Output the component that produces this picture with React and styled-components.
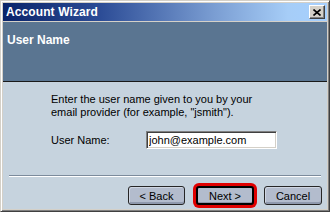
import React from "react";
import styled, { createGlobalStyle } from "styled-components";

const GlobalStyle = createGlobalStyle`
  html, body { margin: 0; padding: 0; background: #d4d0c8; }
  body { font-family: "Liberation Sans", "DejaVu Sans", sans-serif; font-size: 11px; }
  * { box-sizing: border-box; }
`;

const Window = styled.div`
  width: 330px;
  height: 212px;
  background: #d4d0c8;
  border: 1px solid;
  border-color: #d4d0c8 #404040 #404040 #d4d0c8;
  box-shadow: inset 1px 1px #ffffff, inset -1px -1px #808080;
  padding: 2px;
  display: flex;
  flex-direction: column;
`;

const TitleBar = styled.div`
  height: 18px;
  flex: none;
  margin-bottom: 1px;
  background: linear-gradient(to right, #0a246a 0%, #2c4c96 30%, #7a9dd2 65%, #a6cdf7 88%, #a6d0ff 100%);
  display: flex;
  align-items: center;
  justify-content: space-between;
  padding: 0 2px 0 3px;
`;

const TitleText = styled.span`
  color: #ffffff;
  font-weight: bold;
  font-size: 12px;
  letter-spacing: 0.1px;
`;

const CloseButton = styled.div`
  width: 16px;
  height: 14px;
  background: #d4d0c8;
  border: 1px solid;
  border-color: #ffffff #404040 #404040 #ffffff;
  box-shadow: inset -1px -1px #808080;
  display: flex;
  align-items: center;
  justify-content: center;
`;

const Header = styled.div`
  height: 60px;
  flex: none;
  background: #5a7591;
  border-bottom: 1px solid #1a1a1a;
  padding: 11px 4px 0 4px;
`;

const HeaderTitle = styled.div`
  color: #ffffff;
  font-weight: bold;
  font-size: 12px;
`;

const Body = styled.div`
  flex: 1;
  background: #c6d3de;
  display: flex;
  flex-direction: column;
`;

const Content = styled.div`
  padding: 11px 0 0 48px;
  flex: 1;
`;

const Description = styled.p`
  margin: 0;
  line-height: 13px;
  color: #000;
`;

const FieldRow = styled.div`
  display: flex;
  align-items: center;
  margin-top: 12px;
`;

const Label = styled.label`
  width: 95px;
  color: #000;
`;

const TextInput = styled.input`
  width: 131px;
  height: 18px;
  font-family: inherit;
  font-size: 11px;
  padding: 0 2px;
  color: #000;
  background: #ffffff;
  border: 1px solid;
  border-color: #808080 #ffffff #ffffff #808080;
  box-shadow: inset 1px 1px #404040, inset -1px -1px #d4d0c8;
  outline: none;
`;

const Separator = styled.div`
  height: 2px;
  margin: 0 6px;
  border-top: 1px solid #7c8b9c;
  border-bottom: 1px solid #ffffff;
`;

const ButtonRow = styled.div`
  display: flex;
  justify-content: flex-end;
  gap: 10px;
  padding: 9px 5px 4px 0;
`;

const Button = styled.button`
  width: ${(p) => (p.$wide ? 58 : 57)}px;
  height: 19px;
  padding: 0;
  font-family: inherit;
  font-size: 11px;
  color: #000;
  background: #b3bccd;
  border: ${(p) => (p.$focused ? "2px solid #000" : "1px solid #262626")};
  border-radius: 3px;
  box-shadow: ${(p) =>
    p.$focused
      ? "0 0 0 3px #e00000, inset 0 -1px #8c96aa"
      : "inset 1px 1px #cfd6e2, inset 0 -2px #8f99ad"};
  margin-left: ${(p) => (p.$focused ? "1px" : "0")};
`;

export default function App() {
  return (
    <>
      <GlobalStyle />
      <Window>
        <TitleBar>
          <TitleText>Account Wizard</TitleText>
          <CloseButton>
            <svg width="8" height="7" viewBox="0 0 8 7">
              <path d="M0.5 0.5 L7.5 6.5 M7.5 0.5 L0.5 6.5" stroke="#000" strokeWidth="1.6" />
            </svg>
          </CloseButton>
        </TitleBar>
        <Header>
          <HeaderTitle>User Name</HeaderTitle>
        </Header>
        <Body>
          <Content>
            <Description>
              Enter the user name given to you by your
              <br />
              email provider (for example, "jsmith").
            </Description>
            <FieldRow>
              <Label>User Name:</Label>
              <TextInput defaultValue="john@example.com" />
            </FieldRow>
          </Content>
          <Separator />
          <ButtonRow>
            <Button>&lt; Back</Button>
            <Button $focused $wide>Next &gt;</Button>
            <Button $wide>Cancel</Button>
          </ButtonRow>
        </Body>
      </Window>
    </>
  );
}
